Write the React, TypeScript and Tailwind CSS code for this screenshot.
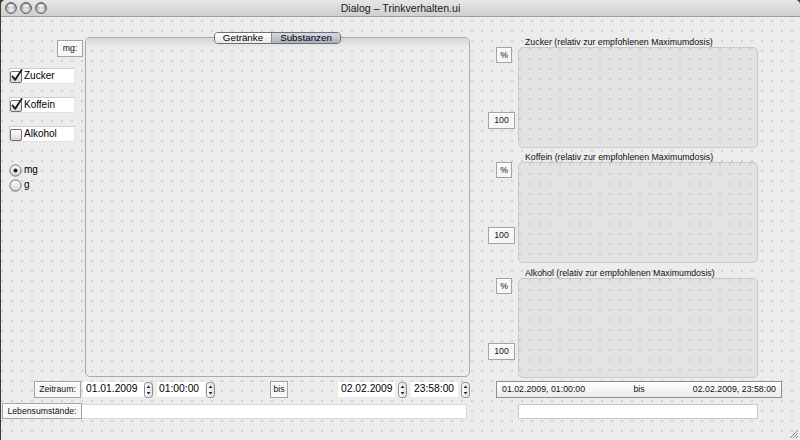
import React from "react";

const dots =
  "bg-[radial-gradient(circle_at_1px_1px,#c2c2c2_0.6px,transparent_0.9px)] bg-[length:10px_10px]";

function LabelBox({ text, className = "" }: { text: string; className?: string }) {
  return (
    <div
      className={`border border-[#a3a3a3] bg-[#f7f7f7] shadow-[inset_0_1px_0_#ffffff] flex items-center justify-center text-[8.7px] leading-none text-[#111] ${className}`}
    >
      {text}
    </div>
  );
}

function CheckGlyph({ checked }: { checked: boolean }) {
  return (
    <svg width="13" height="14" viewBox="0 0 13 14" className="shrink-0">
      <defs>
        <linearGradient id="cbg" x1="0" y1="0" x2="0" y2="1">
          <stop offset="0" stopColor="#ffffff" />
          <stop offset="1" stopColor="#d8d8d8" />
        </linearGradient>
      </defs>
      <rect x="0.5" y="2.5" width="11" height="11" rx="1.5" fill="url(#cbg)" stroke="#6e6e6e" />
      {checked && (
        <path d="M2.6 7.6 L5.2 10.8 L11.6 1" fill="none" stroke="#1c1c1c" strokeWidth="1.9" strokeLinecap="round" strokeLinejoin="round" />
      )}
    </svg>
  );
}

function CheckRow({ label, checked, className = "" }: { label: string; checked: boolean; className?: string }) {
  return (
    <div
      className={`ml-[8px] w-[66px] h-[16px] bg-white border border-[#cdcdcd] border-r-[#e6e6e6] border-b-[#e0e0e0] flex items-center ${className}`}
    >
      <CheckGlyph checked={checked} />
      <span className="ml-[1px] text-[10px] leading-none text-[#000]">{label}</span>
    </div>
  );
}

function Radio({ label, checked, className = "" }: { label: string; checked: boolean; className?: string }) {
  return (
    <div className={`ml-[8px] h-[14px] flex items-center ${className}`}>
      <svg width="13" height="13" viewBox="0 0 13 13" className="shrink-0">
        <defs>
          <linearGradient id="rbg" x1="0" y1="0" x2="0" y2="1">
            <stop offset="0" stopColor="#ffffff" />
            <stop offset="1" stopColor="#d4d4d4" />
          </linearGradient>
        </defs>
        <circle cx="6.5" cy="6.5" r="5.6" fill="url(#rbg)" stroke="#6e6e6e" />
        {checked && <circle cx="6.5" cy="6.5" r="2" fill="#222" />}
      </svg>
      <span className="ml-[2px] text-[10px] leading-none text-[#000]">{label}</span>
    </div>
  );
}

function Spinner({ className = "" }: { className?: string }) {
  return (
    <svg width="9" height="16" viewBox="0 0 9 16" className={`shrink-0 ${className}`}>
      <defs>
        <linearGradient id="spg" x1="0" y1="0" x2="1" y2="0">
          <stop offset="0" stopColor="#ffffff" />
          <stop offset="1" stopColor="#dedede" />
        </linearGradient>
      </defs>
      <rect x="0.5" y="0.5" width="8" height="15" rx="3" fill="url(#spg)" stroke="#8a8a8a" />
      <polygon points="2.6,6 4.5,3.4 6.4,6" fill="#222" />
      <polygon points="2.6,10 4.5,12.6 6.4,10" fill="#222" />
    </svg>
  );
}

function Field({ text, className = "" }: { text: string; className?: string }) {
  return (
    <div className={`h-[15px] bg-white flex items-center text-[10.3px] leading-none text-[#000] ${className}`}>
      {text}
    </div>
  );
}

function ChartSection({ label, h, className = "" }: { label: string; h: string; className?: string }) {
  return (
    <div className={`flex flex-col ${className}`}>
      <div className="h-[10px] pl-[37px] text-[8.8px] leading-[10px] text-[#111] whitespace-nowrap">{label}</div>
      <div className="flex">
        <div className="w-[30px] flex flex-col">
          <LabelBox text="%" className="ml-[8px] w-[16px] h-[16px]" />
          <LabelBox text="100" className="mt-[49px] w-[27px] h-[17px]" />
        </div>
        <div className={`w-[240px] ${h} rounded-[5px] border border-[#c9c9c9] bg-[#e3e3e3] ${dots}`} />
      </div>
    </div>
  );
}

export default function App() {
  return (
    <div className="w-[800px] h-[440px] bg-[#3f3f2c] overflow-hidden font-['Liberation_Sans',Arial,sans-serif]">
      <div className={`ml-[1px] w-[799px] h-[440px] rounded-t-[5px] bg-[#ececec] ${dots} flex flex-col`}>
        {/* Title bar */}
        <div className="h-[17px] shrink-0 flex items-center rounded-t-[5px] bg-gradient-to-b from-[#e6e6e6] to-[#cfcfcf] border-b border-[#9c9c9c]">
          <div className="w-[47px] flex items-center gap-[3px] pl-[4px]">
            {[0, 1, 2].map((i) => (
              <svg key={i} width="12" height="12" viewBox="0 0 12 12">
                <defs>
                  <radialGradient id={`tl${i}`} cx="0.5" cy="0.65" r="0.6">
                    <stop offset="0" stopColor="#f4f4f4" />
                    <stop offset="0.6" stopColor="#b9bcc0" />
                    <stop offset="1" stopColor="#7d8186" />
                  </radialGradient>
                </defs>
                <circle cx="6" cy="6" r="5.4" fill={`url(#tl${i})`} stroke="#5d6064" strokeWidth="1" />
                <ellipse cx="6" cy="3.6" rx="3" ry="1.6" fill="#ffffff" opacity="0.75" />
              </svg>
            ))}
          </div>
          <div className="flex-1 text-center text-[10.6px] leading-none text-[#1a1a1a]">Dialog – Trinkverhalten.ui</div>
          <div className="w-[47px]" />
        </div>

        {/* Top area */}
        <div className="h-[364px] shrink-0 flex">
          {/* Left column */}
          <div className="w-[84px] shrink-0 flex flex-col">
            <LabelBox text="mg:" className="mt-[23px] ml-[56px] w-[26px] h-[17px]" />
            <CheckRow label="Zucker" checked className="mt-[11px]" />
            <CheckRow label="Koffein" checked className="mt-[13px]" />
            <CheckRow label="Alkohol" checked={false} className="mt-[13px]" />
            <Radio label="mg" checked className="mt-[21px]" />
            <Radio label="g" checked={false} className="mt-[1px]" />
          </div>

          {/* Tab widget */}
          <div className="w-[385px] shrink-0 flex flex-col pt-[15px] pb-[4px]">
            <div className="relative z-10 h-[12px] flex justify-center">
              <div className="flex h-[12px] rounded-[4px] border border-[#6f6f6f] overflow-hidden text-[9.8px] leading-none text-[#000]">
                <div className="w-[56px] flex items-center justify-center bg-gradient-to-b from-white to-[#e9e9e9]">Getränke</div>
                <div className="w-[69px] flex items-center justify-center border-l border-[#8c8c8c] bg-gradient-to-b from-[#d6dce4] to-[#a9b2bf]">Substanzen</div>
              </div>
            </div>
            <div className="-mt-[7px] flex-1 rounded-[5px] border border-[#a9a9a9] flex flex-col overflow-hidden">
              <div className="h-[10px] bg-gradient-to-b from-[#d6d6d6] to-[#e6e6e6]/0" />
            </div>
          </div>

          {/* Right column */}
          <div className="ml-[18px] w-[294px] shrink-0 pt-[20px] flex flex-col">
            <ChartSection label="Zucker (relativ zur empfohlenen Maximumdosis)" h="h-[101px]" />
            <ChartSection label="Koffein (relativ zur empfohlenen Maximumdosis)" h="h-[101px]" className="mt-[4px]" />
            <ChartSection label="Alkohol (relativ zur empfohlenen Maximumdosis)" h="h-[100px]" className="mt-[5px]" />
          </div>
        </div>

        {/* Bottom row: Zeitraum */}
        <div className="h-[17px] shrink-0 flex items-center">
          <LabelBox text="Zeitraum:" className="ml-[33px] w-[47px] h-[17px]" />
          <Field text="01.01.2009" className="ml-[2px] w-[61px] pl-[3px]" />
          <Spinner />
          <Field text="01:00:00" className="ml-[4px] w-[48px] pl-[2px]" />
          <Spinner className="ml-[1px]" />
          <LabelBox text="bis" className="ml-[55px] w-[18px] h-[17px]" />
          <Field text="02.02.2009" className="ml-[50px] w-[57px] pl-[3px]" />
          <Spinner className="ml-[3px]" />
          <Field text="23:58:00" className="ml-[4px] w-[47px] pl-[3px]" />
          <Spinner className="ml-[3px]" />
          <div className="ml-[26px] w-[286px] h-[17px] border border-[#8f8f8f] bg-gradient-to-b from-white to-[#ececec] flex items-center justify-between px-[5px] text-[8.8px] leading-none text-[#111]">
            <span>01.02.2009, 01:00:00</span>
            <span>bis</span>
            <span>02.02.2009, 23:58:00</span>
          </div>
        </div>

        {/* Lebensumstände row */}
        <div className="mt-[5px] h-[16px] shrink-0 flex items-center">
          <LabelBox text="Lebensumstände:" className="ml-[1px] w-[80px] h-[16px]" />
          <div className="w-[385px] h-[15px] bg-white border border-[#d6d6d6] border-l-0" />
          <div className="ml-[51px] w-[240px] h-[15px] bg-white border border-[#c8c8c8]" />
        </div>

        {/* Remaining + resize grip */}
        <div className="flex-1 flex justify-end items-end">
          <svg width="11" height="11" viewBox="0 0 11 11" className="mr-[1px] mb-[1px]">
            <path d="M10 2 L2 10 M10 5 L5 10 M10 8 L8 10" stroke="#8a8a8a" strokeWidth="1" />
          </svg>
        </div>
      </div>
    </div>
  );
}
